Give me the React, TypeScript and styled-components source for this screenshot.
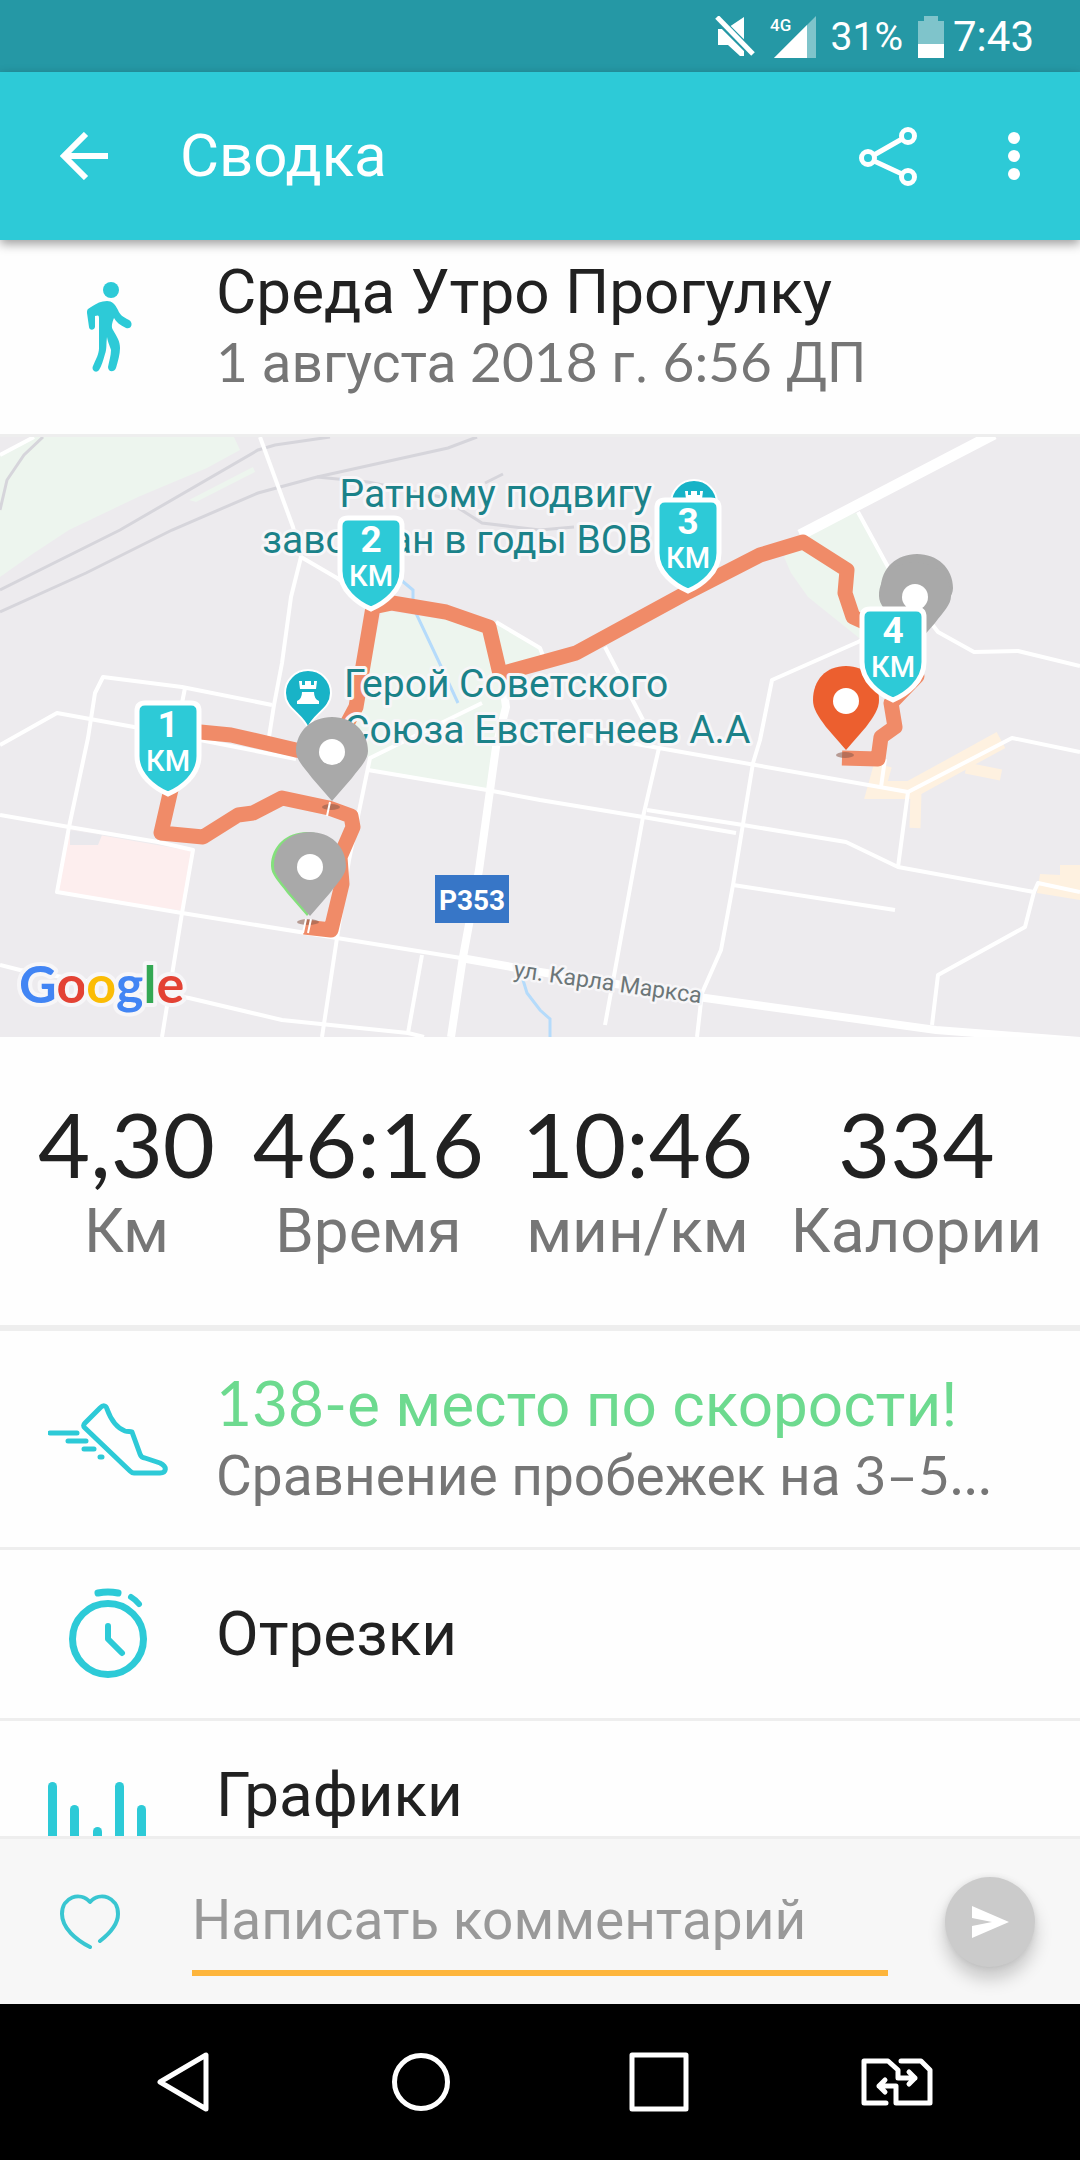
import React from "react";
import styled, { createGlobalStyle, css } from "styled-components";

const color = {
  status: "#2598a5",
  brand: "#2dcad7",
  ink: "#212121",
  muted: "#767676",
  rule: "#eeeeee",
  win: "#6dda8f",
  accent: "#fdb53c",
};

const GlobalStyle = createGlobalStyle`
  *, *::before, *::after { box-sizing: border-box; }
  body {
    margin: 0;
    background: #ffffff;
    font-family: Roboto, "Noto Sans", sans-serif;
  }
`;

const Screen = styled.div`
  display: flex;
  flex-direction: column;
  height: 100vh;
  color: ${color.ink};
  background: #fefefe;
`;

/* ---------- status bar ---------- */

const StatusBar = styled.div`
  display: flex;
  align-items: center;
  justify-content: flex-end;
  flex: none;
  height: 72px;
  padding: 2px 46px 0;
  background: ${color.status};
  color: #ffffff;
`;

const StatusIcons = styled.div`
  display: flex;
  align-items: center;
  gap: 15px;
`;

const StatusText = styled.span<{ $size: number }>`
  font-size: ${(p) => p.$size}px;
  line-height: 48px;
`;

const Clock = styled(StatusText)`
  margin-left: 9px;
`;

/* ---------- app bar ---------- */

const AppBar = styled.header`
  position: relative;
  z-index: 1;
  display: flex;
  align-items: center;
  flex: none;
  height: 168px;
  background: ${color.brand};
  color: #ffffff;
  box-shadow: 0 4px 10px rgba(0, 0, 0, 0.38);
`;

const iconButton = css`
  display: flex;
  align-items: center;
  justify-content: center;
  padding: 0;
  border: 0;
  background: none;
  color: inherit;
`;

const BarButton = styled.button<{ $width: number }>`
  ${iconButton}
  width: ${(p) => p.$width}px;
  height: 168px;
`;

const ScreenTitle = styled.h1`
  flex: 1;
  margin: 0;
  padding-left: 12px;
  font-size: 60px;
  font-weight: 400;
  line-height: 72px;
`;

/* ---------- content ---------- */

const Content = styled.main`
  flex: 1;
  min-height: 0;
  overflow: hidden;
`;

const rowLayout = css`
  display: grid;
  grid-template-columns: 216px minmax(0, 1fr);
  align-items: center;
`;

const Summary = styled.section`
  ${rowLayout}
  padding: 16px 72px 36px 0;
  border-bottom: 3px solid ${color.rule};
`;

const RowButton = styled.button`
  ${rowLayout}
  width: 100%;
  padding: 38px 72px 36px 0;
  border: 0;
  border-bottom: 3px solid ${color.rule};
  background: none;
  color: inherit;
  font: inherit;
  text-align: left;
`;

const ShortRow = styled(RowButton)`
  padding-top: 24px;
  padding-bottom: 24px;
`;

const RowIcon = styled.span`
  display: flex;
  justify-content: center;
`;

const RowText = styled.span`
  display: flex;
  flex-direction: column;
  min-width: 0;
  min-height: 142px;
`;

const RowTitle = styled.span<{ $tone?: string }>`
  font-size: 62px;
  line-height: 72px;
  color: ${(p) => p.$tone ?? color.ink};
`;

const RowDetail = styled.span`
  font-size: 55px;
  line-height: 70px;
  white-space: nowrap;
  color: ${color.muted};
`;

const Digits = styled.span`
  font-family: Lato, Roboto, sans-serif;
  font-weight: 400;
  line-height: 0;
`;

const MapDrawing = styled.svg`
  display: block;
  width: 100%;
  height: auto;
  background: #edebee;
  font-family: Roboto, sans-serif;
`;

const Stats = styled.dl`
  display: flex;
  justify-content: space-between;
  margin: 0;
  padding: 54px 38px 58px;
  border-bottom: 6px solid ${color.rule};
`;

const Stat = styled.div`
  display: flex;
  flex-direction: column-reverse;
  align-items: center;
`;

const StatLabel = styled.dt`
  font-size: 62px;
  line-height: 72px;
  color: ${color.muted};
`;

const StatValue = styled.dd`
  margin: 0;
  font-family: Lato, Roboto, sans-serif;
  font-size: 90px;
  font-weight: 400;
  line-height: 104px;
`;

/* ---------- comment bar ---------- */

const CommentBar = styled.form`
  display: flex;
  align-items: center;
  flex: none;
  height: 168px;
  padding: 0 45px 0 24px;
  border-top: 3px solid ${color.rule};
  background: #f7f7f7;
`;

const LikeButton = styled.button`
  ${iconButton}
  width: 132px;
  height: 132px;
  color: #39c6d1;
`;

const CommentInput = styled.input`
  flex: 1;
  min-width: 0;
  height: 108px;
  margin: 0 57px 0 36px;
  padding: 2px 0 0;
  border: 0;
  border-bottom: 6px solid ${color.accent};
  border-radius: 0;
  outline: 0;
  background: none;
  color: ${color.ink};
  font-family: inherit;
  font-size: 55px;

  &::placeholder {
    color: #999999;
    opacity: 1;
  }
`;

const SendButton = styled.button`
  ${iconButton}
  width: 90px;
  height: 90px;
  border-radius: 50%;
  background: #cbcbcb;
  color: #ffffff;
  box-shadow: 0 12px 18px rgba(0, 0, 0, 0.2), 0 0 6px rgba(0, 0, 0, 0.08);
`;

/* ---------- navigation bar ---------- */

const NavBar = styled.nav`
  display: grid;
  grid-template-columns: repeat(4, 1fr);
  flex: none;
  height: 156px;
  padding: 0 64px;
  background: #000000;
  color: #ffffff;
`;

const NavButton = styled.button`
  ${iconButton}
`;

/* ---------- icons ---------- */

const MuteIcon = () => (
  <svg width="40" height="42" viewBox="0 0 40 42" fill="currentColor" aria-hidden="true">
    <path d="M14 11 L29 1 V28 Z M3 13 H7 L29 35 V40 H25 L13 29 H3 Z" />
    <path d="M1 1 L38 38" stroke={color.status} strokeWidth="8" />
    <path d="M2 1 L38 38" stroke="currentColor" strokeWidth="5" />
  </svg>
);

const SignalIcon = () => (
  <svg width="46" height="42" viewBox="0 0 46 42" aria-hidden="true">
    <path d="M46 0 V42 H4 Z" fill="#7fc4cb" />
    <path d="M37 9 V42 H4 Z" fill="#ffffff" />
    <text x="0" y="15" fontSize="17" fontWeight="500" fill="#ffffff">
      4G
    </text>
  </svg>
);

const BatteryIcon = () => (
  <svg width="26" height="42" viewBox="0 0 26 42" aria-hidden="true">
    <path d="M6 0 H20 V5 H26 V28 H0 V5 H6 Z" fill="#7fc4cb" />
    <path d="M0 28 H26 V42 H0 Z" fill="#ffffff" />
  </svg>
);

const BackIcon = () => (
  <svg width="48" height="48" viewBox="0 0 48 48" fill="none" stroke="currentColor" strokeWidth="6" aria-hidden="true">
    <path d="M26 2 L4 24 L26 46 M4 24 H48" />
  </svg>
);

const ShareIcon = () => (
  <svg width="60" height="60" viewBox="0 0 60 60" fill="none" stroke="currentColor" strokeWidth="5" aria-hidden="true">
    <circle cx="10" cy="32" r="6.5" />
    <circle cx="50" cy="10" r="6.5" />
    <circle cx="50" cy="51" r="6.5" />
    <path d="M16 29 L44 13 M16 35 L44 48" />
  </svg>
);

const MoreIcon = () => (
  <svg width="12" height="48" viewBox="0 0 12 48" fill="currentColor" aria-hidden="true">
    <circle cx="6" cy="6" r="6" />
    <circle cx="6" cy="24" r="6" />
    <circle cx="6" cy="42" r="6" />
  </svg>
);

const WalkIcon = () => (
  <svg width="120" height="120" viewBox="0 -3 120 120" fill={color.brand} aria-hidden="true">
    <circle cx="63" cy="20" r="8" />
    <path d="M59 31 C64 31 67 34 70 40 C72 45 74 46 81 50 C86 53 83 60 78 58 C72 55 68 52 66 48 C64 53 63 57 65 60 C69 67 72 71 72 78 C72 84 70 91 68 98 C66 103 60 102 60 97 C61 91 63 86 63 80 C62 76 60 73 59 67 C58 75 59 79 57 84 C55 91 54 95 51 100 C48 104 43 100 45 96 C48 89 51 84 51 78 L51 48 C51 45 50 45 47 46 L47 57 C46 61 41 60 41 57 L39 43 C39 39 40 39 43 37 C49 33 53 31 59 31 Z" />
  </svg>
);

const ShoeIcon = () => (
  <svg width="120" height="120" viewBox="0 0 120 120" fill="none" stroke={color.brand} strokeWidth="5" strokeLinecap="round" strokeLinejoin="round" aria-hidden="true">
    <path d="M37 43 L52 28 C55 25 58 25 59 29 C63 40 69 48 77 51 C80 52 82 51 84 52 L92 74 C93 77 95 78 97 78 L112 83 C120 87 118 93 112 93 L86 93 C84 93 83 92 82 91 L37 48 C35 46 35 45 37 43 Z" />
    <path d="M2 53 H29 M20 61 H38 M36 69 H46 M52 77 H54" />
  </svg>
);

const StopwatchIcon = () => (
  <svg width="120" height="120" viewBox="0 0 120 120" fill="none" stroke={color.brand} strokeWidth="7" strokeLinecap="round" aria-hidden="true">
    <circle cx="60" cy="65" r="35.5" />
    <path d="M60 52 V65 L74 79" strokeWidth="6" strokeLinejoin="round" />
    <path d="M50 19 Q60 17 70 19" />
    <path d="M83 23 Q88 26 91 30" strokeWidth="6" />
  </svg>
);

const ChartIcon = () => (
  <svg width="120" height="120" viewBox="0 0 120 120" fill={color.brand} aria-hidden="true">
    <rect x="0" y="12" width="9" height="96" rx="4.5" />
    <rect x="22" y="35" width="9" height="73" rx="4.5" />
    <rect x="45" y="57" width="9" height="51" rx="4.5" />
    <rect x="67" y="12" width="9" height="96" rx="4.5" />
    <rect x="89" y="35" width="9" height="73" rx="4.5" />
  </svg>
);

const HeartIcon = () => (
  <svg width="60" height="56" viewBox="0 0 60 56" fill="none" stroke="currentColor" strokeWidth="4" strokeLinecap="round" strokeLinejoin="round" aria-hidden="true">
    <path d="M30 53 C16 46 2 34 2 20 C2 3 20 -3 30 8 C40 -3 58 3 58 20 C58 31 49 40 40 47" />
  </svg>
);

const SendIcon = () => (
  <svg width="38" height="32" viewBox="0 0 38 32" fill="currentColor" aria-hidden="true">
    <path d="M1 0 L38 16 L1 32 V20 L21 16 L1 12 Z" />
  </svg>
);

const NavBackIcon = () => (
  <svg width="54" height="60" viewBox="0 0 54 60" fill="none" stroke="currentColor" strokeWidth="5" strokeLinejoin="round" aria-hidden="true">
    <path d="M50 3 V57 L4 30 Z" />
  </svg>
);

const NavHomeIcon = () => (
  <svg width="60" height="60" viewBox="0 0 60 60" fill="none" stroke="currentColor" strokeWidth="5" aria-hidden="true">
    <circle cx="30" cy="30" r="26.5" />
  </svg>
);

const NavRecentIcon = () => (
  <svg width="60" height="60" viewBox="0 0 60 60" fill="none" stroke="currentColor" strokeWidth="5" strokeLinejoin="round" aria-hidden="true">
    <rect x="3" y="3" width="54" height="54" />
  </svg>
);

const SimSwapIcon = () => (
  <svg width="72" height="48" viewBox="0 0 72 48" fill="none" stroke="currentColor" strokeWidth="5" strokeLinecap="round" strokeLinejoin="round" aria-hidden="true">
    <path d="M25 45 H3 V3 H27 L37 12 V20 H54 M48 14 L54 20 L48 26" />
    <path d="M40 3 H60 L69 12 V45 H35 V28 H18 M24 22 L18 28 L24 34" />
  </svg>
);

/* ---------- route map ---------- */

const KmMarker = ({ x, y, n }: { x: number; y: number; n: number }) => (
  <g transform={`translate(${x} ${y})`} fill="#ffffff" textAnchor="middle">
    <path
      d="M-23 -93 H23 Q31 -93 31 -85 V-40 C31 -21 14 -8 0 -2 C-14 -8 -31 -21 -31 -40 V-85 Q-31 -93 -23 -93 Z"
      fill={color.brand}
      stroke="#ffffff"
      strokeWidth="5"
    />
    <text y="-59" fontSize="37" fontWeight="700">
      {n}
    </text>
    <text y="-25" fontSize="29" fontWeight="500">
      КМ
    </text>
  </g>
);

const Pin = ({ x, y, fill, r = 36 }: { x: number; y: number; fill: string; r?: number }) => (
  <g transform={`translate(${x} ${y})`}>
    <path
      d={`M0 49 L-20 26 C-28 15 ${-r} 8 ${-r} -1 C${-r} -21 -20 -35 0 -35 C20 -35 ${r} -21 ${r} -1 C${r} 8 28 15 20 26 Z`}
      fill={fill}
    />
    <circle r="13" fill="#ffffff" />
  </g>
);

const MonumentPin = ({ x, y }: { x: number; y: number }) => (
  <g transform={`translate(${x} ${y})`}>
    <path
      d="M0 35 C-6 20 -23 16 -23 0 A23 23 0 0 1 23 0 C23 16 6 20 0 35 Z"
      fill="#18b3c7"
      stroke="#ffffff"
      strokeWidth="2"
    />
    <path d="M-9 -12 H-6 V-8 H-3 V-12 H3 V-8 H6 V-12 H9 L8 -4 H-8 Z M-6 -1 H6 Q6 6 11 8 V11 H-11 V8 Q-6 6 -6 -1 Z" fill="#ffffff" />
  </g>
);

const RouteMap = () => (
  <MapDrawing viewBox="0 0 1080 600" role="img" aria-label="Карта маршрута">
    <g fill="#edf5ee">
      <path d="M0 18 L34 0 H234 L240 13 L207 31 L138 60 L69 93 L34 116 L0 140 Z" />
      <path d="M189 63 L253 30 L255 35 L196 65 Z" />
      <path d="M382 173 L447 183 L496 185 L540 211 L543 216 L506 240 V270 L487 353 L368 333 V320 L350 283 L360 262 Z" />
      <path d="M858 75 L888 131 L884 173 L864 205 L808 160 L791 136 L784 120 L800 96 Z" />
    </g>
    <path d="M70 393 L192 414 L183 474 L58 455 Z" fill="#fdeeee" />
    <path d="M70 393 L102 398 L98 408 L70 408 Z" fill="#e9e8ec" />
    <g fill="none" stroke="#fef1e0">
      <path d="M1001 303 L910 353 L876 353 L883 328" strokeWidth="18" />
      <path d="M966 331 L1001 338 M916 354 L915 391" strokeWidth="11" />
    </g>
    <path d="M1040 437 L1060 438 V428 H1080 V463 L1037 456 Z" fill="#fef1e0" />

    <g fill="none" stroke="#d6d5db" strokeWidth="3">
      <path d="M43 0 L24 18 L7 43 L0 73" />
      <path d="M0 153 L120 93 L258 13 L275 8 L330 0" />
      <path d="M0 175 L86 136 L172 93 L258 56 L317 40 L448 11 L477 0" />
      <path d="M317 40 L368 45 L441 60 L482 86 L540 93 L574 90 M485 46 L503 37" />
    </g>

    <g fill="none" stroke="#ffffff" strokeWidth="4" strokeLinejoin="round">
      <path d="M0 18 L34 0" />
      <path d="M260 0 L293 90 L301 120 L337 141 L372 165 M301 120 L291 160 L282 226 L274 268 L269 300" />
      <path d="M0 308 L57 276 L134 290 L240 300" />
      <path d="M272 268 L182 250 L103 240 L95 256 L88 301 L69 390 L57 455 L182 476 L337 501 L461 521" />
      <path d="M185 251 L182 266" />
      <path d="M200 303 L296 322" />
      <path d="M0 378 L69 390 L158 405 L193 413 L182 476 L162 600" />
      <path d="M322 600 L337 501 L349 423 L370 321 L482 266" />
      <path d="M0 528 L20 533 L189 561 L282 583 L408 596 L424 600" />
      <path d="M422 518 L408 596" />
      <path d="M368 333 L487 353 L540 363 L643 380 L736 396" />
      <path d="M647 373 L743 388 L846 405 L898 430 L1034 455 L1038 446 L1080 455" />
      <path d="M540 290 L659 311 L643 380 L605 588 M659 311 L908 355 L1012 301 L1080 315" />
      <path d="M908 355 L898 430 M881 350 L885 322" />
      <path d="M868 200 L858 205 L772 243 L760 303 L753 326 L733 448 L721 513 L702 556 L697 600" />
      <path d="M733 448 L895 473 M1034 455 L1025 490 L938 538 L932 588" />
      <path d="M858 75 L888 130 L938 195 L974 215 L1018 214 L1080 229" />
      <path d="M605 210 L643 283 M496 185 L540 211 L545 224" />
    </g>
    <g fill="none" stroke="#ffffff" strokeWidth="8">
      <path d="M502 240 L506 270 L496 310 L479 433 L463 520 L451 600" />
      <path d="M461 521 L540 535 L698 560 L936 593 L1080 604" />
      <path d="M994 -3 L800 98" strokeWidth="11" />
    </g>
    <g fill="none" stroke="#b5dbfb" strokeWidth="3">
      <path d="M401 143 L413 153 V170 L439 225 L458 266" />
      <path d="M523 543 L527 556 L540 573 L550 582 V600" />
    </g>

    <g fill="none" stroke="#f08b68" strokeWidth="15" strokeLinejoin="round">
      <path d="M304 490 L331 493 L342 447 L340 420 L353 390 L351 379 L329 371 L282 361 L253 376 L238 378 L203 400 L161 396 L175 335 L190 294 L231 298 L296 313 L330 318 L349 283 L356 270 L373 170 L392 166 L446 175 L489 190 L500 237 L540 226 L576 216 L688 155 L760 118 L803 105 L847 133 L845 156 L853 180 L875 190 L917 239 L891 266 L895 290 L881 300 L878 322 L842 321" />
    </g>
    <g fill="#8a5a4a" opacity="0.55">
      <ellipse cx="331" cy="370" rx="9" ry="3" />
      <ellipse cx="308" cy="485" rx="11" ry="3" />
      <ellipse cx="845" cy="318" rx="9" ry="3" />
    </g>
    <path d="M330 365 L327 379 M306 482 L303 496 M311 482 L308 496" stroke="#ffffff" strokeWidth="2" />

    <MonumentPin x={308} y={256} />
    <MonumentPin x={694} y={66} />

    <g fontSize="39" fill="#1b8289" stroke="#f7f6f8" strokeWidth="6" strokeLinejoin="round" paintOrder="stroke">
      <text x="652" y="70" textAnchor="end">
        Ратному подвигу
      </text>
      <text x="652" y="116" textAnchor="end">
        заводчан в годы ВОВ
      </text>
      <text x="344" y="260">
        Герой Советского
      </text>
      <text x="344" y="306">
        Союза Евстегнеев А.А
      </text>
    </g>

    <Pin x={917} y={152} fill="#a9a9a9" />
    <Pin x={915} y={160} fill="#a9a9a9" />
    <Pin x={332} y={315} fill="#a9a9a9" />
    <Pin x={307} y={430} fill="#84e07c" />
    <Pin x={310} y={430} fill="#a9a9a9" />
    <Pin x={846} y={264} fill="#ec5f2f" r={33} />

    <KmMarker x={168} y={359} n={1} />
    <KmMarker x={371} y={174} n={2} />
    <KmMarker x={688} y={156} n={3} />
    <KmMarker x={893} y={265} n={4} />

    <rect x="435" y="438" width="74" height="48" fill="#3776c7" />
    <text x="472" y="473" fontSize="28" fontWeight="700" fill="#ffffff" textAnchor="middle">
      Р353
    </text>
    <text
      transform="translate(513 540) rotate(8)"
      fontSize="23"
      fill="#6c7678"
      stroke="#f7f6f8"
      strokeWidth="5"
      strokeLinejoin="round"
      paintOrder="stroke"
    >
      ул. Карла Маркса
    </text>
    <text
      x="19"
      y="566"
      fontFamily="Lato, sans-serif"
      fontSize="52"
      fontWeight="700"
      stroke="#f7f6f8"
      strokeWidth="8"
      strokeLinejoin="round"
      paintOrder="stroke"
    >
      <tspan fill="#4285f4">G</tspan>
      <tspan fill="#e34234">o</tspan>
      <tspan fill="#fbbc05">o</tspan>
      <tspan fill="#4285f4">g</tspan>
      <tspan fill="#34a853">l</tspan>
      <tspan fill="#e34234">e</tspan>
    </text>
  </MapDrawing>
);

const stats = [
  { value: "4,30", label: "Км" },
  { value: "46:16", label: "Время" },
  { value: "10:46", label: "мин/км" },
  { value: "334", label: "Калории" },
];

export default function App() {
  return (
    <Screen>
      <GlobalStyle />
      <StatusBar>
        <StatusIcons>
          <MuteIcon />
          <SignalIcon />
          <StatusText $size={39}>31%</StatusText>
          <BatteryIcon />
        </StatusIcons>
        <Clock $size={42}>7:43</Clock>
      </StatusBar>

      <AppBar>
        <BarButton $width={168} type="button" aria-label="Назад">
          <BackIcon />
        </BarButton>
        <ScreenTitle>Сводка</ScreenTitle>
        <BarButton $width={120} type="button" aria-label="Поделиться">
          <ShareIcon />
        </BarButton>
        <BarButton $width={132} type="button" aria-label="Ещё">
          <MoreIcon />
        </BarButton>
      </AppBar>

      <Content>
        <Summary>
          <RowIcon>
            <WalkIcon />
          </RowIcon>
          <RowText>
            <RowTitle>Среда Утро Прогулку</RowTitle>
            <RowDetail>
              <Digits>1</Digits> августа <Digits>2018</Digits> г. <Digits>6:56</Digits> ДП
            </RowDetail>
          </RowText>
        </Summary>

        <RouteMap />

        <Stats>
          {stats.map((s) => (
            <Stat key={s.label}>
              <StatLabel>{s.label}</StatLabel>
              <StatValue>{s.value}</StatValue>
            </Stat>
          ))}
        </Stats>

        <RowButton type="button">
          <RowIcon>
            <ShoeIcon />
          </RowIcon>
          <RowText>
            <RowTitle $tone={color.win}>
              <Digits>138-</Digits>е место по скорости!
            </RowTitle>
            <RowDetail>
              Сравнение пробежек на <Digits>3–5…</Digits>
            </RowDetail>
          </RowText>
        </RowButton>

        <ShortRow type="button">
          <RowIcon>
            <StopwatchIcon />
          </RowIcon>
          <RowTitle>Отрезки</RowTitle>
        </ShortRow>

        <RowButton type="button">
          <RowIcon>
            <ChartIcon />
          </RowIcon>
          <RowText>
            <RowTitle>Графики</RowTitle>
          </RowText>
        </RowButton>
      </Content>

      <CommentBar>
        <LikeButton type="button" aria-label="Нравится">
          <HeartIcon />
        </LikeButton>
        <CommentInput type="text" aria-label="Написать комментарий" placeholder="Написать комментарий" />
        <SendButton type="button" aria-label="Отправить">
          <SendIcon />
        </SendButton>
      </CommentBar>

      <NavBar>
        <NavButton type="button" aria-label="Назад">
          <NavBackIcon />
        </NavButton>
        <NavButton type="button" aria-label="Домой">
          <NavHomeIcon />
        </NavButton>
        <NavButton type="button" aria-label="Недавние">
          <NavRecentIcon />
        </NavButton>
        <NavButton type="button" aria-label="Сменить SIM">
          <SimSwapIcon />
        </NavButton>
      </NavBar>
    </Screen>
  );
}
